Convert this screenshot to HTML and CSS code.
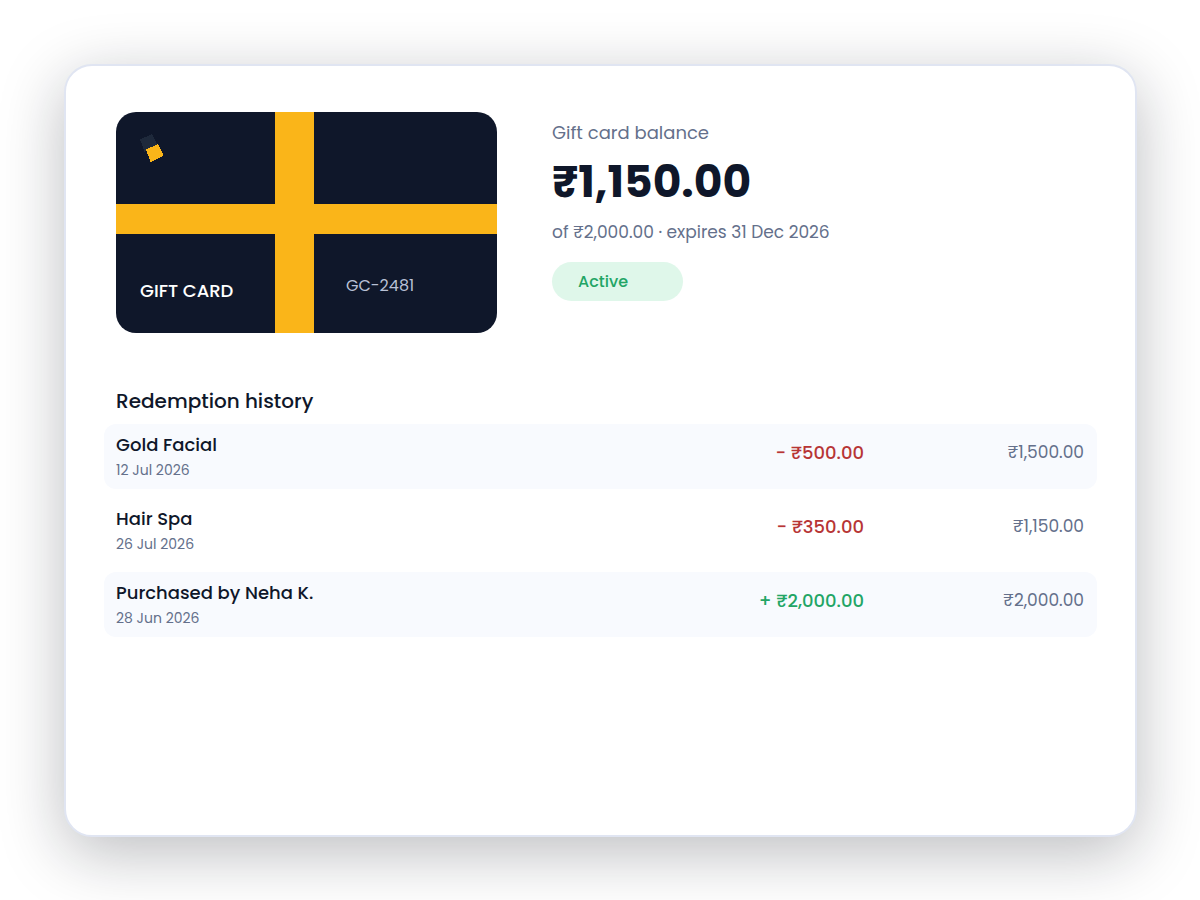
FILE: index.html
```html
<!DOCTYPE html>
<html lang="en">
<head>
<meta charset="utf-8">
<meta name="viewport" content="width=device-width, initial-scale=1">
<title>Gift card balance</title>
<link rel="stylesheet" href="styles.css">
</head>
<body>
<main class="panel">
  <section class="summary">
    <div class="gift-card">
      <svg class="gift-mark" viewBox="0 0 24 28" aria-hidden="true" shape-rendering="crispEdges">
        <path fill="#1e293b" d="M0 5.500 12 0 18 12 4.500 17.500z"/>
        <path fill="#fab519" d="M6 15.500 18 10 23.500 21.500 10.500 28z"/>
      </svg>
      <div class="gift-footer">
        <span class="gift-title">GIFT CARD</span>
        <span class="gift-code">GC-2481</span>
      </div>
    </div>
    <div class="balance">
      <h1 class="balance-label">Gift card balance</h1>
      <p class="balance-amount">₹1,150.00</p>
      <p class="balance-note">of ₹2,000.00 · expires 31 Dec 2026</p>
      <span class="status">Active</span>
    </div>
  </section>
  <section class="history">
    <h2 class="history-title" id="history-title">Redemption history</h2>
    <table class="history-table" aria-labelledby="history-title">
      <tbody>
        <tr class="entry">
          <td class="entry-main"><div class="entry-name">Gold Facial</div><div class="entry-date">12 Jul 2026</div></td>
          <td class="entry-change debit">− ₹500.00</td>
          <td class="entry-balance">₹1,500.00</td>
        </tr>
        <tr class="entry">
          <td class="entry-main"><div class="entry-name">Hair Spa</div><div class="entry-date">26 Jul 2026</div></td>
          <td class="entry-change debit">− ₹350.00</td>
          <td class="entry-balance">₹1,150.00</td>
        </tr>
        <tr class="entry">
          <td class="entry-main"><div class="entry-name">Purchased by Neha K.</div><div class="entry-date">28 Jun 2026</div></td>
          <td class="entry-change credit">+ ₹2,000.00</td>
          <td class="entry-balance">₹2,000.00</td>
        </tr>
      </tbody>
    </table>
  </section>
</main>
</body>
</html>
```
FILE: styles.css
```css
* { box-sizing: border-box; }

body {
  margin: 0;
  padding: 64px 63px 63px 64px;
  min-height: 100vh;
  display: flex;
  background: #fff;
  color: #0f172a;
  font-family: Poppins, Inter, "Open Sans", sans-serif;
}

h1, h2, p { margin: 0; }

.panel {
  flex: 1;
  min-width: 0;
  padding: 46px 38px;
  border: 2px solid #e0e5f2;
  border-radius: 28px;
  background: #fff;
  box-shadow: 0 16px 64px rgba(15, 18, 28, 0.28);
}

.summary {
  display: flex;
  flex-wrap: wrap;
  gap: 55px;
  padding: 0 12px;
}

.gift-card {
  display: flex;
  flex-direction: column;
  justify-content: space-between;
  width: 381px;
  height: 221px;
  padding: 22px 24px 30px;
  border-radius: 20px;
  background:
    linear-gradient(#fab519, #fab519) 159px 0 / 39px 100% no-repeat,
    linear-gradient(#fab519, #fab519) 0 92px / 100% 30px no-repeat,
    #0f172a;
}

.gift-mark { width: 24px; height: 28px; }

.gift-footer {
  display: grid;
  grid-template-columns: 206px 1fr;
  align-items: start;
}

.gift-title {
  padding-top: 5px;
  color: #fff;
  font-size: 18px;
  font-weight: 500;
  line-height: 24px;
}

.gift-code {
  color: #b9c1d6;
  font-size: 16px;
  line-height: 24px;
}

.balance { padding-top: 8px; }

.balance-label {
  color: #64708b;
  font-size: 18px;
  font-weight: 400;
  line-height: 26px;
}

.balance-amount {
  font-size: 44px;
  font-weight: 700;
  line-height: 72px;
}

.balance-note {
  color: #64708b;
  font-size: 17px;
  line-height: 28px;
}

.status {
  display: block;
  width: 131px;
  margin-top: 16px;
  padding: 1px 26px 0;
  border-radius: 20px;
  background: #dff7ea;
  color: #22a565;
  font-size: 16px;
  font-weight: 500;
  line-height: 38px;
}

.history { margin-top: 54px; }

.history-title {
  padding: 1px 12px 0;
  font-size: 20px;
  font-weight: 500;
  line-height: 27px;
}

.history-table {
  width: 100%;
  border-collapse: separate;
  border-spacing: 0 9px;
}

.entry td {
  height: 65px;
  padding: 0;
  vertical-align: top;
}

.entry:nth-child(odd) td { background: #f8fafe; }
.entry td:first-child { border-radius: 12px 0 0 12px; }
.entry td:last-child { border-radius: 0 12px 12px 0; }

.entry .entry-main { padding: 8px 12px 0; }

.entry-name {
  font-size: 18px;
  font-weight: 500;
  line-height: 26px;
}

.entry-date {
  color: #64708b;
  font-size: 14px;
  line-height: 24px;
}

.entry .entry-change {
  width: 160px;
  padding-top: 16px;
  font-size: 18px;
  font-weight: 500;
  line-height: 26px;
  text-align: right;
  white-space: nowrap;
}

.debit { color: #b73535; }
.credit { color: #22a565; }

.entry .entry-balance {
  width: 233px;
  padding: 15px 13px 0 0;
  color: #64708b;
  font-size: 17px;
  line-height: 26px;
  text-align: right;
}
```
